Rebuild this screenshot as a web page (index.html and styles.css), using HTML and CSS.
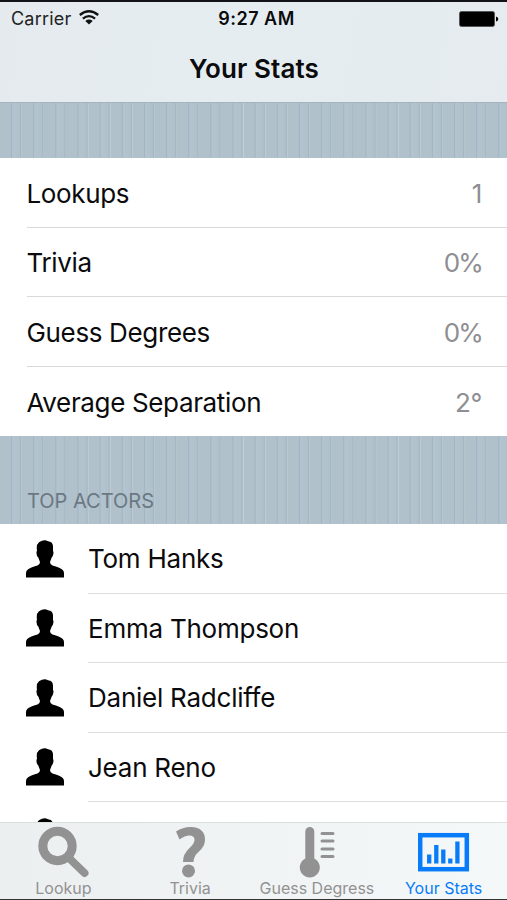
FILE: index.html
```html
<!DOCTYPE html>
<html lang="en">
<head>
<meta charset="utf-8">
<title>Your Stats</title>
<link rel="stylesheet" href="styles.css">
</head>
<body>
<svg width="0" height="0" class="defs">
  <symbol id="person" viewBox="0 0 38 38">
    <path d="M0 37.500V33Q0 29.500 6 27.300Q9 26.200 11.500 25.600Q14 24.500 14 22Q13 19.500 12.300 17.500Q10.500 16 10.500 13Q10.300 11.500 11 11Q10 4.500 13 2.300Q18 -1 22 1.200Q27 1.700 27 6.500V11Q27.800 12 27.300 14Q27 16.500 25.700 17.500Q25 19.500 24 22Q24 24.500 26.500 25.600Q29 26.200 32 27.300Q38 29.500 38 33V37.500Z"/>
  </symbol>
</svg>
<div class="screen">
  <header class="top">
    <div class="status">
      <div class="carrier"><span>Carrier</span>
        <svg class="wifi" width="20" height="15" viewBox="0 0 20 15"><g fill="none" stroke="#111" stroke-width="2.300"><path d="M.8 5Q10 -2.400 19.200 5"/><path d="M3.900 8.700Q10 3.600 16.100 8.700"/></g><path d="M6.300 11Q10 8.200 13.700 11L10 14.600Z" fill="#111"/></svg>
      </div>
      <div class="time">9:27 AM</div>
      <div class="power"><svg width="40" height="16" viewBox="0 0 40 16"><rect x=".5" y=".5" width="35" height="15" rx="2" stroke="#555"/><path d="M37 5.500Q39.300 6 39.300 8T37 10.500Z"/></svg></div>
    </div>
    <h1>Your Stats</h1>
  </header>
  <main>
    <div class="stripes gap"></div>
    <ul class="list stats">
      <li><span>Lookups</span><span class="value">1</span></li>
      <li><span>Trivia</span><span class="value percent">0%</span></li>
      <li><span>Guess Degrees</span><span class="value percent">0%</span></li>
      <li><span>Average Separation</span><span class="value">2°</span></li>
    </ul>
    <div class="stripes heading"><h2>TOP ACTORS</h2></div>
    <ul class="list actors">
      <li><svg class="avatar"><use href="#person"/></svg><span>Tom Hanks</span></li>
      <li><svg class="avatar"><use href="#person"/></svg><span>Emma Thompson</span></li>
      <li><svg class="avatar"><use href="#person"/></svg><span>Daniel Radcliffe</span></li>
      <li><svg class="avatar"><use href="#person"/></svg><span>Jean Reno</span></li>
      <li><svg class="avatar"><use href="#person"/></svg><span></span></li>
    </ul>
  </main>
  <nav class="tabs">
    <a class="tab"><svg width="52" height="52" viewBox="0 0 52 52"><circle cx="20.500" cy="20" r="14.700" fill="none" stroke="currentColor" stroke-width="9"/><path d="M32 32L47.500 47" stroke="currentColor" stroke-width="8" stroke-linecap="round"/></svg><span>Lookup</span></a>
    <a class="tab"><svg width="52" height="52" viewBox="0 0 52 52"><path d="M12 5.500Q19 .8 27 1Q41 1.500 41 14Q41 20 35 25.500Q29.500 30 29.500 36H19Q19 28 25 22.500Q30.500 17.500 30.500 14Q30.500 9.500 25.500 9.500Q21 9.500 15.500 13.500Z" fill="currentColor"/><circle cx="24.500" cy="44.900" r="6.500" fill="currentColor"/></svg><span>Trivia</span></a>
    <a class="tab"><svg width="52" height="52" viewBox="0 0 52 52"><path d="M14.300 5.500a4.500 4.500 0 0 1 9 0V32.500a10 10 0 1 1-9 0Z" fill="currentColor"/><path d="M31 7.500H42M31 15H42M31 22.900H42M31 30.500H42" stroke="currentColor" stroke-width="3" stroke-linecap="round"/></svg><span>Guess Degress</span></a>
    <a class="tab active"><svg width="52" height="52" viewBox="0 0 52 52"><rect x="2.200" y="9.200" width="46.600" height="34" fill="none" stroke="currentColor" stroke-width="4.500"/><path d="M11.200 37.500V28.500M18.300 37.500V19M25.300 37.500V23.500M32.300 37.500V32.500M39.400 37.500V15.500" stroke="currentColor" stroke-width="4.300"/></svg><span>Your Stats</span></a>
  </nav>
</div>
</body>
</html>
```
FILE: styles.css
```css
* { box-sizing: border-box; }
body { margin: 0; font-family: Inter, "Liberation Sans", sans-serif; color: #0b0b0d; }
h1, h2, ul { margin: 0; padding: 0; font-weight: 400; }
.defs { display: block; }
.screen { height: 900px; display: flex; flex-direction: column; overflow: hidden; background: #fff; border-bottom: 1px solid #333; }
.top { height: 103px; flex: none; border-top: 2px solid #111318; border-bottom: 1px solid #a5b3bc; background: linear-gradient(100deg, #e5eaef, #e5edf0 45%, #e4ecef 70%, #e6ebef); }
.status { height: 33px; display: grid; grid-template-columns: 1fr auto 1fr; align-items: center; padding: 0 8px 0 11px; }
.carrier { display: flex; align-items: center; gap: 8px; font-size: 18px; letter-spacing: .2px; color: #222; }
.wifi { margin-top: -3px; }
.time { font-size: 18px; font-weight: 600; letter-spacing: .5px; padding-left: 3px; }
.power { display: flex; justify-content: flex-end; }
h1 { font-size: 26px; font-weight: 600; letter-spacing: .1px; text-align: center; line-height: 34px; margin: 17px 0 0 1px; }
main { flex: 1; min-height: 0; overflow: hidden; }
.stripes { background: repeating-linear-gradient(90deg, #b0c1cc 0, #b0c1cc 10.5px, #a1b4bf 11.5px, #b2c4cf 12.5px, #b0c1cc 19.5px, #a4b6c1 20.6px, #bfced7 22px, #b0c1cc 22.150px); }
.gap { height: 55px; }
.heading { height: 88px; display: flex; align-items: flex-end; padding: 0 27px 11px; }
h2 { font-size: 20px; line-height: 24px; color: #6b7883; }
.list { list-style: none; font-size: 26px; }
.list li { height: 69.500px; display: flex; align-items: center; margin-left: 27px; border-bottom: 1px solid #d9d9db; }
.stats { letter-spacing: -.35px; }
.stats li { justify-content: space-between; padding: 2px 25px 0 0; }
.stats li span { margin-left: -.5px; }
.stats li:last-child { border-bottom: 0; }
.value { color: #8e8e93; }
.stats .percent { letter-spacing: -1.800px; }
.actors { letter-spacing: -.24px; }
.actors span { flex: 1; height: 69.500px; line-height: 69px; border-bottom: 1px solid #dededf; }
.actors li { border: 0; margin-left: 26px; }
.avatar { width: 38px; height: 38px; margin-right: 24px; }
.tabs { height: 77px; flex: none; display: grid; grid-template-columns: repeat(4, 1fr); border-top: 1px solid #dcdfe0; background: linear-gradient(90deg, #eceff0, #f5f8f9); }
.tab { display: flex; flex-direction: column; align-items: center; padding-top: 3px; color: #929292; font-size: 16px; line-height: 20px; }
.tab.active { color: #087cf8; }
```
